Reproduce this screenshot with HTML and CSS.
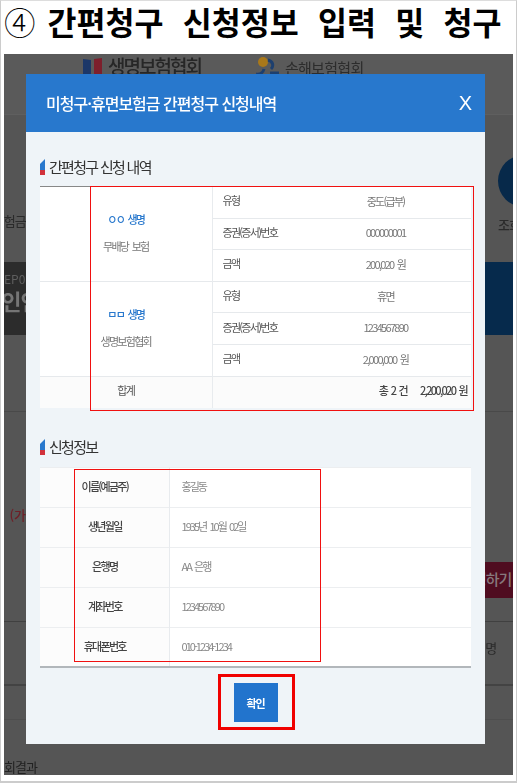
FILE: index.html
```html
<!DOCTYPE html>
<html lang="ko">
<head>
  <meta charset="UTF-8">
  <meta name="viewport" content="width=device-width, initial-scale=1.0">
  <title>간편청구 신청정보 입력 및 청구</title>
  <link rel="stylesheet" href="styles.css">
</head>
<body>
  <div class="sheet">
    <h1 class="step"><span class="step-no">④</span>간편청구 신청정보 입력 및 청구</h1>

    <div class="shot">
      <!-- dimmed page behind the popup -->
      <div class="backdrop">
        <div class="bd-top">
          <div class="bd-logo">
            <svg width="20" height="20" viewBox="0 0 20 20"><path d="M0 3l8 1v16H0z" fill="#1c3768"/><path d="M11 3l8-1v18h-8z" fill="#7d1f2c"/></svg>
            <span class="bd-logo-a">생명보험협회</span>
          </div>
          <div class="bd-logo bd-logo-second">
            <svg width="26" height="20" viewBox="0 0 26 20"><circle cx="8" cy="6" r="5" fill="#a9781a"/><path d="M1 18c4 1 7-1 8-5M13 4c5 1 6 6 3 9M15 17h9" fill="none" stroke="#1d3f6e" stroke-width="3"/></svg>
            <span class="bd-logo-b">손해보험협회</span>
          </div>
        </div>
        <div class="bd-row bd-mid">
          <div class="edge-l"><span class="bd-text">보험금</span></div>
          <div class="edge-r bd-search">
            <div class="bd-circle"></div>
            <span class="bd-text bd-search-label">조회</span>
          </div>
        </div>
        <div class="bd-row bd-band">
          <div class="edge-l bd-band-text">
            <span class="bd-ep">EP01</span>
            <span class="bd-big">본인인</span>
          </div>
        </div>
        <div class="bd-row bd-l1"></div>
        <div class="bd-row bd-l2">
          <div class="edge-l"><span class="bd-red">(가</span></div>
          <div class="edge-r"><div class="bd-btn">청하기</div></div>
        </div>
        <div class="bd-row bd-l3">
          <div class="edge-l"></div>
          <div class="edge-r"><span class="bd-text bd-desc">설명</span></div>
        </div>
        <div class="bd-row bd-l4"></div>
        <div class="bd-row bd-l5"><span class="bd-text bd-result">회결과</span></div>
      </div>

      <!-- popup -->
      <div class="modal">
        <div class="modal-head">
          <span class="modal-title">미청구·휴면보험금 간편청구 신청내역</span>
          <span class="modal-close">X</span>
        </div>
        <div class="modal-body">
          <h2 class="sec-title">
            <svg class="sec-icon" width="5" height="16" viewBox="0 0 5 16"><path d="M0 5L5 0v11H0z" fill="#2878cd"/><path d="M0 11h5v5H0z" fill="#d1313b"/></svg>
            간편청구 신청 내역
          </h2>
          <table class="list">
            <tr>
              <td class="ins" rowspan="3"><p class="ins-name">ㅇㅇ 생명</p><p>무배당 보험</p></td>
              <td class="lbl">유형</td>
              <td class="val">중도(급부)</td>
            </tr>
            <tr><td class="lbl">증권(증서)번호</td><td class="val">000000001</td></tr>
            <tr><td class="lbl">금액</td><td class="val">200,020 원</td></tr>
            <tr class="group">
              <td class="ins" rowspan="3"><p class="ins-name">ㅁㅁ 생명</p><p>생명보험협회</p></td>
              <td class="lbl">유형</td>
              <td class="val">휴면</td>
            </tr>
            <tr><td class="lbl">증권(증서)번호</td><td class="val">1234567890</td></tr>
            <tr><td class="lbl">금액</td><td class="val">2,000,000 원</td></tr>
            <tr class="sum">
              <td class="sum-name">합계</td>
              <td class="sum-val" colspan="2"><b>총 2 건</b><b class="sum-amt">2,200,020 원</b></td>
            </tr>
          </table>

          <h2 class="sec-title sec-two">
            <svg class="sec-icon" width="5" height="16" viewBox="0 0 5 16"><path d="M0 5L5 0v11H0z" fill="#2878cd"/><path d="M0 11h5v5H0z" fill="#d1313b"/></svg>
            신청정보
          </h2>
          <table class="info">
            <tr><th>이름(예금주)</th><td>홍길동</td></tr>
            <tr><th>생년월일</th><td>1935년 10월 02일</td></tr>
            <tr><th>은행명</th><td>AA 은행</td></tr>
            <tr><th>계좌번호</th><td>1234567890</td></tr>
            <tr><th>휴대폰번호</th><td>010-1234-1234</td></tr>
          </table>

          <div class="actions"><button class="btn">확인</button></div>
        </div>
      </div>

      <!-- red call-outs drawn on the screenshot -->
      <div class="mark mark-list"></div>
      <div class="mark mark-form"></div>
      <div class="mark mark-btn"></div>
    </div>
  </div>
</body>
</html>
```

FILE: styles.css
```css
* {
  box-sizing: border-box;
}
body {
  margin: 0;
  background: #fff;
  font-family: "Noto Sans CJK KR", "Noto Sans", sans-serif;
}
p {
  margin: 0;
}
.sheet {
  width: 517px;
  height: 783px;
  padding: 0 3px 0 3px;
  border: 1px solid #ccc;
  border-top-color: #ddd;
  border-bottom-width: 2px;
  display: flex;
  flex-direction: column;
  overflow: hidden;
}
.step {
  margin: 0;
  height: 53px;
  font-size: 31.5px;
  line-height: 40px;
  font-weight: 700;
  color: #000;
  word-spacing: 10.5px;
  white-space: nowrap;
}
.step-no {
  font-weight: 300;
  margin-right: 12px;
}

/* screenshot area */
.shot {
  position: relative;
  height: 721px;
  width: 509px;
  overflow: hidden;
  background: #555;
}
.backdrop {
  filter: blur(0.5px);
}
.bd-top {
  height: 61px;
  padding-left: 79px;
  display: flex;
  background: #5a5a5a;
  border-bottom: 1px solid #5f5f5f;
}
.bd-logo {
  display: flex;
  gap: 5px;
  height: 24px;
  padding-top: 2px;
}
.bd-logo-second {
  margin-left: 54px;
  gap: 4px;
}
.bd-logo-a {
  font-size: 19px;
  line-height: 20px;
  font-weight: 500;
  letter-spacing: -2px;
  color: #262626;
}
.bd-logo-b {
  font-size: 15px;
  line-height: 22px;
  letter-spacing: -0.7px;
  color: #2c2c2c;
  padding-top: 1px;
}
.bd-row {
  display: flex;
  justify-content: space-between;
}
.edge-l {
  width: 22px;
  display: flex;
  justify-content: flex-end;
  white-space: nowrap;
  overflow: hidden;
}
.edge-r {
  width: 28px;
  white-space: nowrap;
  overflow: hidden;
}
.bd-text {
  font-size: 13px;
  line-height: 18px;
  letter-spacing: -0.8px;
  color: #2a2a2a;
}
.bd-mid {
  height: 147px;
  background: #555;
}
.bd-mid .edge-l {
  padding-top: 97px;
}
.bd-search {
  padding: 40px 0 0 13px;
}
.bd-circle {
  width: 52px;
  height: 52px;
  border-radius: 50%;
  background: #07294a;
}
.bd-search-label {
  display: block;
  margin-top: 9px;
  font-weight: 500;
}
.bd-band {
  height: 73px;
  background: linear-gradient(90deg, #2c2c2c 50%, #062a4c 50%);
}
.bd-band-text {
  display: block;
  padding-top: 10px;
  color: #5f5f5f;
}
.bd-ep {
  display: block;
  font-size: 12px;
  line-height: 14px;
}
.bd-big {
  display: block;
  margin-left: -22px;
  font-size: 22px;
  line-height: 28px;
  color: #757575;
  font-weight: 700;
  letter-spacing: -1px;
}
.bd-l1 {
  height: 77px;
  border-bottom: 1px solid #494949;
}
.bd-l2 {
  height: 210px;
  border-bottom: 1px solid #404040;
}
.bd-l2 .edge-l {
  padding-top: 93px;
}
.bd-red {
  font-size: 13px;
  line-height: 20px;
  font-weight: 500;
  color: #6e1f27;
}
.bd-btn {
  margin-top: 150px;
  height: 36px;
  margin-left: -16px;
  padding-left: 4px;
  background: #4f0c20;
  color: #87787d;
  font-size: 15px;
  line-height: 34px;
  font-weight: 500;
  letter-spacing: -1px;
}
.bd-l3 {
  height: 64px;
  border-bottom: 2px solid #434343;
}
.bd-l3 .edge-r {
  padding-top: 17px;
}
.bd-desc {
  display: block;
  margin-left: -11px;
}
.bd-l4 {
  height: 34px;
  border-bottom: 1px solid #4e4e4e;
}
.bd-result {
  display: block;
  margin-top: 38px;
  font-size: 13px;
  line-height: 18px;
  letter-spacing: -1px;
  white-space: nowrap;
  color: #222;
}

/* popup */
.modal {
  position: absolute;
  left: 22px;
  top: 20px;
  width: 459px;
  height: 670px;
  background: #eff4f8;
  filter: blur(0.35px);
}
.modal-head {
  height: 58px;
  padding: 0 13px 0 20px;
  background: #2878cd;
  color: #fff;
  display: flex;
  align-items: center;
  justify-content: space-between;
}
.modal-title {
  font-size: 16px;
  font-weight: 500;
  letter-spacing: -1px;
}
.modal-close {
  font-family: "Liberation Sans", sans-serif;
  font-size: 20px;
}
.modal-body {
  padding: 24px 14px 0;
}
.sec-title {
  margin: 0 0 8px;
  height: 22px;
  display: flex;
  align-items: center;
  gap: 4px;
  font-size: 15px;
  line-height: 22px;
  font-weight: 400;
  letter-spacing: -1.7px;
  color: #333;
}
.sec-two {
  margin-top: 28px;
  margin-bottom: 9px;
}
.sec-icon {
  flex: none;
}
table {
  width: 431px;
  border-collapse: collapse;
  table-layout: fixed;
  background: #fff;
  border-top: 1px solid #888;
  font-size: 11px;
  letter-spacing: -1.7px;
  word-spacing: 2px;
}
td, th {
  padding: 0;
}
.list td {
  height: 31.6px;
}
.list tr + tr td {
  border-top: 1px solid #e6e9ec;
}
.ins {
  width: 172px;
  text-align: center;
  color: #777;
  border-right: 1px solid #e8ebee;
  line-height: 16px;
  padding-bottom: 2px;
}
.ins-name {
  color: #2878cd;
  font-weight: 500;
  margin-bottom: 11px;
}
.lbl {
  width: 88px;
  padding: 0 0 4px 10px;
  color: #555;
}
.val {
  text-align: center;
  padding-bottom: 3px;
  color: #777;
}
.sum td {
  background: #fbfbfb;
  vertical-align: top;
  padding-top: 5px;
  color: #555;
}
.sum-name {
  text-align: center;
  border-right: 1px solid #e8ebee;
}
.sum-val {
  text-align: right;
  padding-right: 4px;
}
.sum-val b {
  font-weight: 500;
  color: #444;
}
.sum-amt {
  margin-left: 13px;
}
.info {
  border-bottom: 2px solid #b2b7bb;
}
.info th, .info td {
  height: 40px;
  border-top: 1px solid #eceef0;
}
.info th {
  width: 129px;
  padding-left: 1px;
  padding-bottom: 2px;
  font-weight: 500;
  color: #444;
  border-right: 1px solid #e8ebee;
  background: #fcfcfc;
}
.info td {
  padding-left: 12px;
  padding-bottom: 2px;
  color: #888;
  letter-spacing: -1.95px;
}
.actions {
  display: flex;
  justify-content: center;
  margin-top: 15px;
}
.btn {
  width: 44px;
  height: 39px;
  padding: 0;
  border: 0;
  background: #2274cd;
  color: #fff;
  font-family: inherit;
  font-size: 11px;
  font-weight: 700;
  letter-spacing: -1.2px;
}

/* red boxes */
.mark {
  position: absolute;
  border: 1px solid #f01010;
}
.mark-list {
  left: 86px;
  top: 132px;
  width: 384px;
  height: 225px;
}
.mark-form {
  left: 70px;
  top: 415px;
  width: 247px;
  height: 193px;
}
.mark-btn {
  left: 214px;
  top: 620px;
  width: 77px;
  height: 56px;
  border: 3px solid #f00000;
}
```
